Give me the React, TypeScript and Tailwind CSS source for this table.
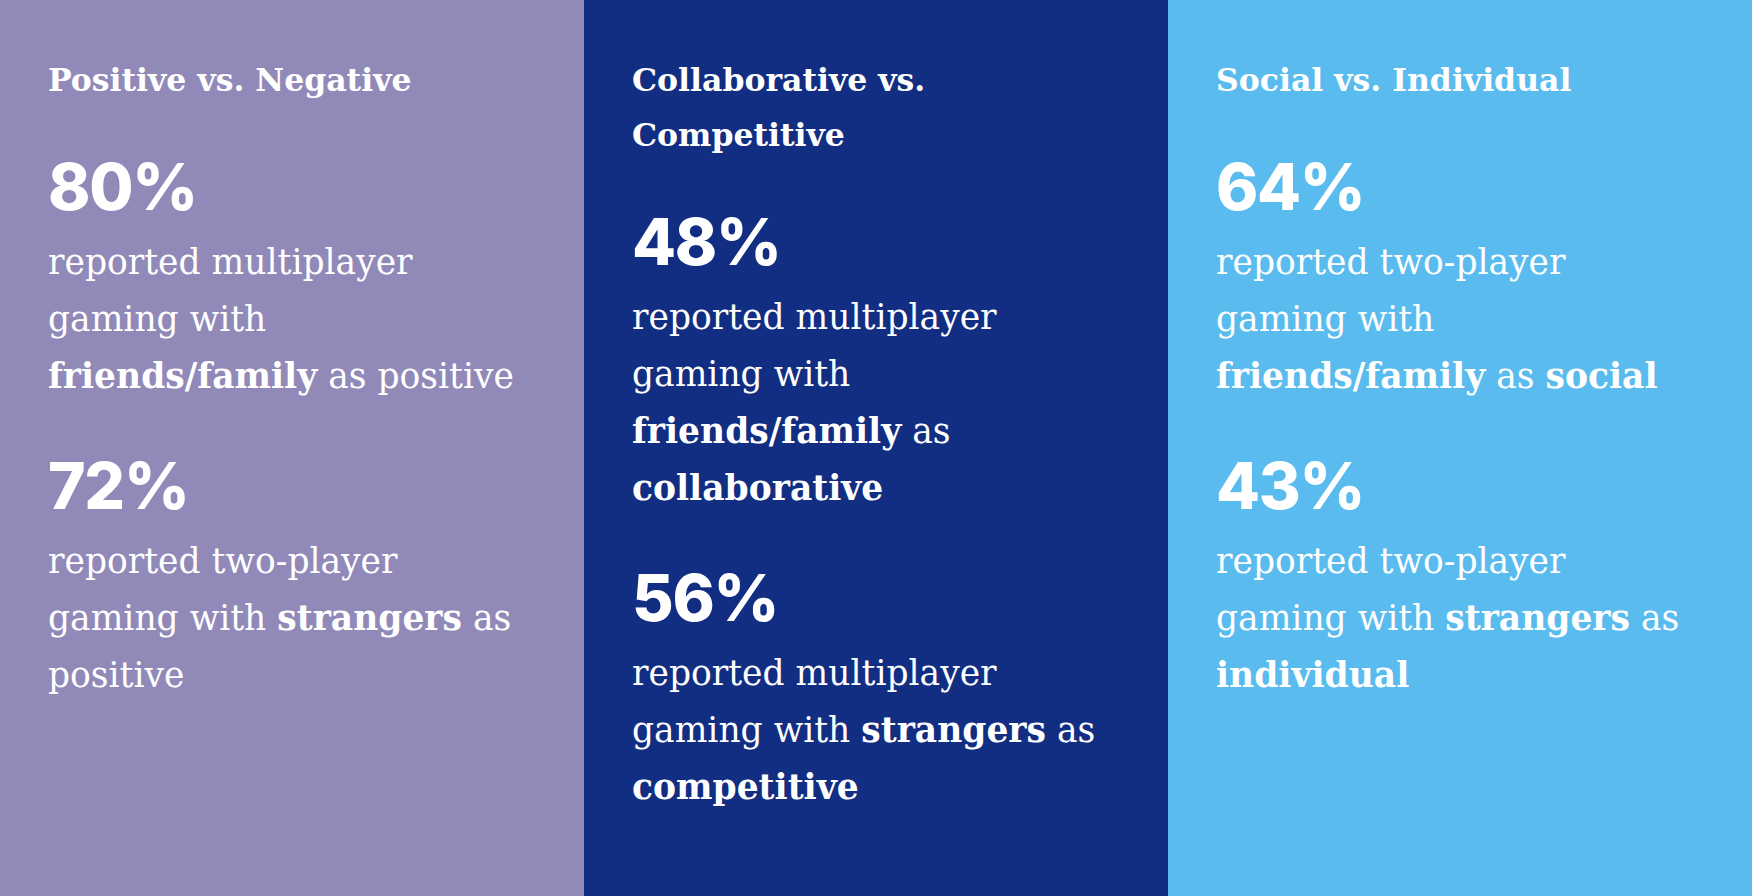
import React from 'react'

type Stat = {
  value: string
  text: React.ReactNode
}

type Column = {
  title: React.ReactNode
  bg: string
  stats: Stat[]
}

const columns: Column[] = [
  {
    title: 'Positive vs. Negative',
    bg: 'bg-[#918ab9]',
    stats: [
      {
        value: '80%',
        text: (
          <>
            reported multiplayer gaming with <b className="font-bold">friends/family</b> as positive
          </>
        ),
      },
      {
        value: '72%',
        text: (
          <>
            reported two-player gaming with <b className="font-bold">strangers</b> as positive
          </>
        ),
      },
    ],
  },
  {
    title: 'Collaborative vs. Competitive',
    bg: 'bg-[#122e83]',
    stats: [
      {
        value: '48%',
        text: (
          <>
            reported multiplayer gaming with <b className="font-bold">friends/family</b> as{' '}
            <b className="font-bold">collaborative</b>
          </>
        ),
      },
      {
        value: '56%',
        text: (
          <>
            reported multiplayer gaming with <b className="font-bold">strangers</b> as{' '}
            <b className="font-bold">competitive</b>
          </>
        ),
      },
    ],
  },
  {
    title: 'Social vs. Individual',
    bg: 'bg-[#5abcee]',
    stats: [
      {
        value: '64%',
        text: (
          <>
            reported two-player gaming with <b className="font-bold">friends/family</b> as{' '}
            <b className="font-bold">social</b>
          </>
        ),
      },
      {
        value: '43%',
        text: (
          <>
            reported two-player gaming with <b className="font-bold">strangers</b> as{' '}
            <b className="font-bold">individual</b>
          </>
        ),
      },
    ],
  },
]

function StatBlock({ stat, first }: { stat: Stat; first: boolean }) {
  return (
    <div className={first ? 'mt-[48px]' : 'mt-[49px]'}>
      <p className="font-['Inter',sans-serif] text-[64px] font-extrabold leading-[64px] tracking-[-0.02em]">
        {stat.value}
      </p>
      <p className="mt-[15px] font-['DejaVu_Serif',serif] text-[34.5px] leading-[57px]">{stat.text}</p>
    </div>
  )
}

export default function App() {
  return (
    <div className="grid h-[896px] w-full grid-cols-3 text-white">
      {columns.map((col, i) => (
        <section key={i} className={`${col.bg} pl-12 pr-[52px] pt-[52px]`}>
          <h2 className="font-['DejaVu_Serif',serif] text-[31.5px] font-bold leading-[55px]">{col.title}</h2>
          {col.stats.map((s, j) => (
            <StatBlock key={j} stat={s} first={j === 0} />
          ))}
        </section>
      ))}
    </div>
  )
}
